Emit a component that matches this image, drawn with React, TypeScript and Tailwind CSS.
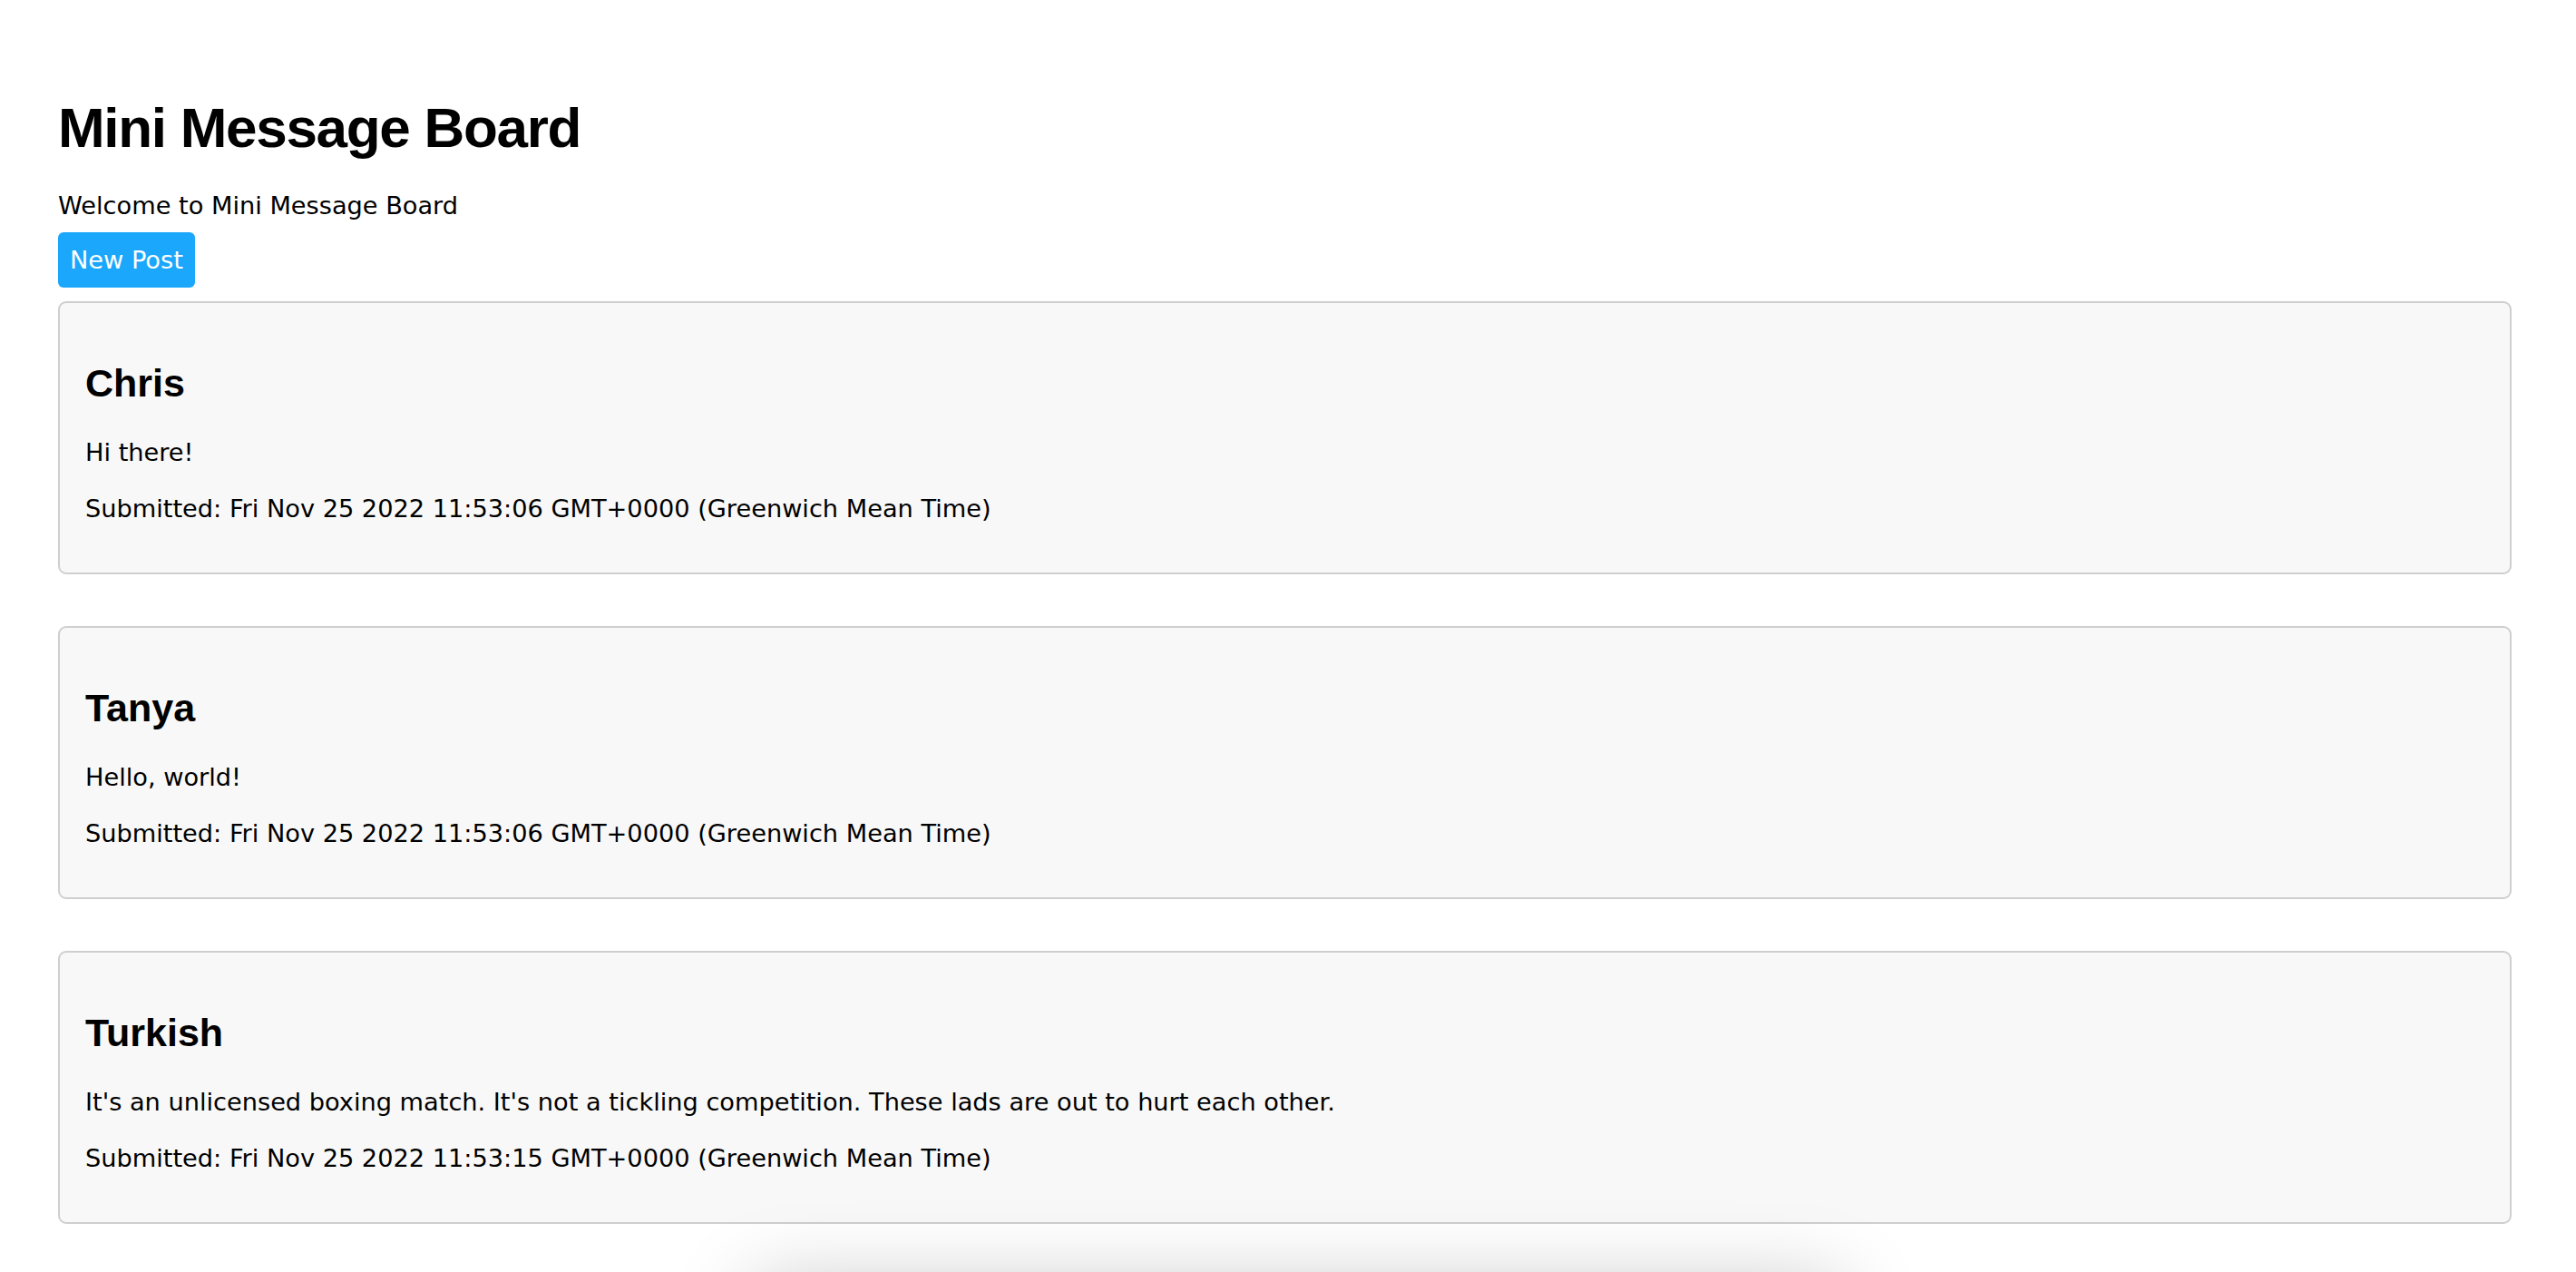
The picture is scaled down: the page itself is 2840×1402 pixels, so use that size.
const posts = [
  {
    user: "Chris",
    text: "Hi there!",
    added: "Fri Nov 25 2022 11:53:06 GMT+0000 (Greenwich Mean Time)",
  },
  {
    user: "Tanya",
    text: "Hello, world!",
    added: "Fri Nov 25 2022 11:53:06 GMT+0000 (Greenwich Mean Time)",
  },
  {
    user: "Turkish",
    text: "It's an unlicensed boxing match. It's not a tickling competition. These lads are out to hurt each other.",
    added: "Fri Nov 25 2022 11:53:15 GMT+0000 (Greenwich Mean Time)",
  },
];

export default function App() {
  return (
    <div className="relative h-screen overflow-hidden bg-white pl-[64px] pr-[71px] pt-[110px] font-['DejaVu_Sans',sans-serif] text-[27.2px] text-black">
      <h1 className="font-['Liberation_Sans',Arial,sans-serif] text-[62px] font-bold leading-[62px] tracking-[-1.3px]">
        Mini Message Board
      </h1>
      <p className="mt-[39px] leading-[32px]">Welcome to Mini Message Board</p>
      <button className="mt-[13px] block h-[61px] rounded-[6px] bg-[#1aa7fc] px-[13px] leading-[61px] text-white">
        New Post
      </button>

      <div className="mt-[15px] flex flex-col gap-[57px]">
        {posts.map((p, i) => (
          <Message key={i} user={p.user} text={p.text} added={p.added} />
        ))}
      </div>

      {/* shadow of something sitting just below the window */}
      <div className="absolute left-[830px] top-[1415px] h-[200px] w-[1200px] rounded-[12px] bg-white shadow-[0_0_90px_rgba(0,0,0,0.22)]" />
    </div>
  );
}

function Message({
  user,
  text,
  added,
}: {
  user: string;
  text: string;
  added: string;
}) {
  return (
    <div className="h-[301px] rounded-[9px] border-2 border-[#cfcfcf] bg-[#f8f8f8] px-[28px] pt-[67px]">
      <h2 className="font-['Liberation_Sans',Arial,sans-serif] text-[43px] font-bold leading-[43px]">
        {user}
      </h2>
      <p className="mt-[39px] leading-[32px]">{text}</p>
      <p className="mt-[30px] leading-[32px]">Submitted: {added}</p>
    </div>
  );
}
